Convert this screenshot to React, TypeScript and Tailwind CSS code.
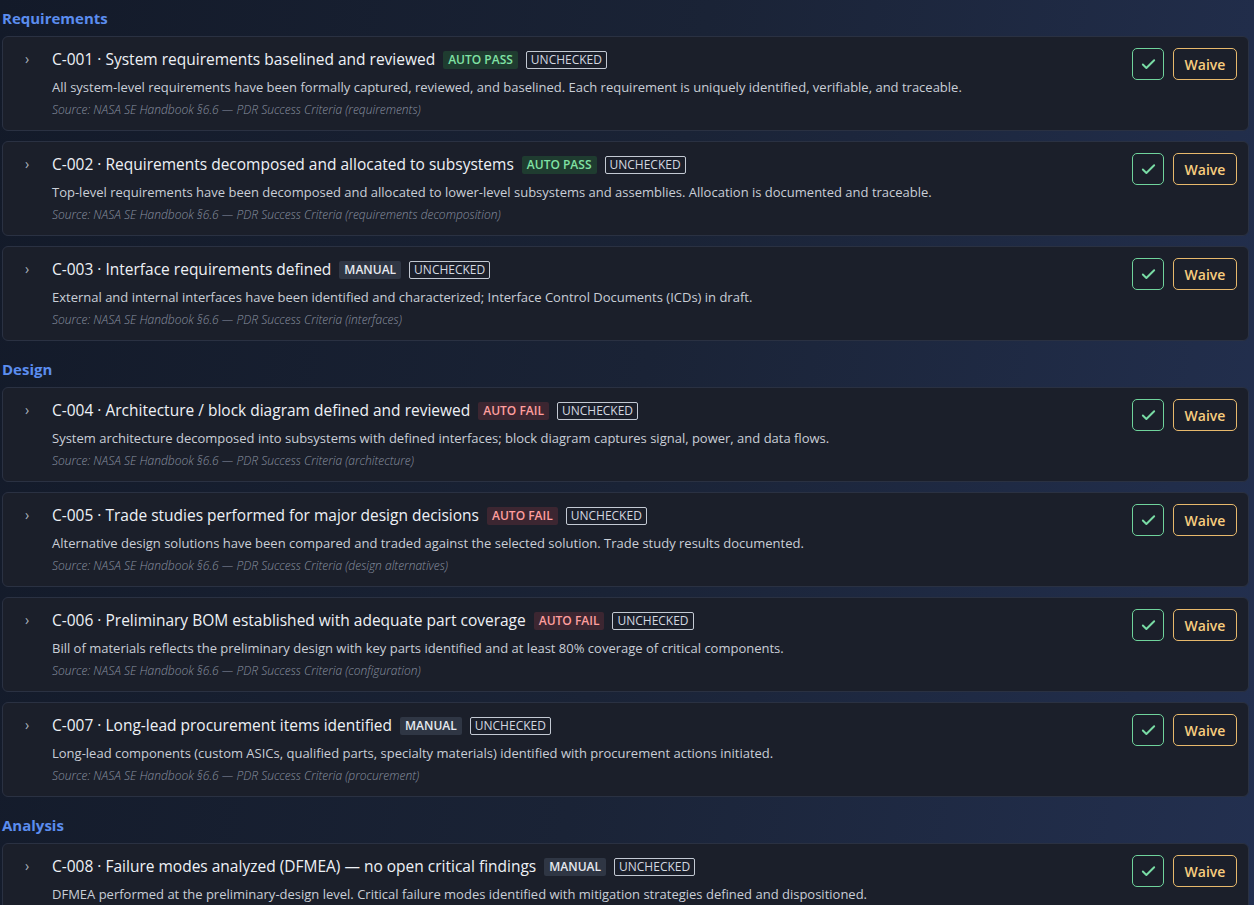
import { Check } from 'lucide-react';

type Mode = 'pass' | 'fail' | 'manual';

interface Criterion {
  id: string;
  title: string;
  mode: Mode;
  desc: string;
  topic: string;
}

const sections: { name: string; items: Criterion[] }[] = [
  {
    name: 'Requirements',
    items: [
      {
        id: 'C-001',
        title: 'System requirements baselined and reviewed',
        mode: 'pass',
        desc: 'All system-level requirements have been formally captured, reviewed, and baselined. Each requirement is uniquely identified, verifiable, and traceable.',
        topic: 'requirements',
      },
      {
        id: 'C-002',
        title: 'Requirements decomposed and allocated to subsystems',
        mode: 'pass',
        desc: 'Top-level requirements have been decomposed and allocated to lower-level subsystems and assemblies. Allocation is documented and traceable.',
        topic: 'requirements decomposition',
      },
      {
        id: 'C-003',
        title: 'Interface requirements defined',
        mode: 'manual',
        desc: 'External and internal interfaces have been identified and characterized; Interface Control Documents (ICDs) in draft.',
        topic: 'interfaces',
      },
    ],
  },
  {
    name: 'Design',
    items: [
      {
        id: 'C-004',
        title: 'Architecture / block diagram defined and reviewed',
        mode: 'fail',
        desc: 'System architecture decomposed into subsystems with defined interfaces; block diagram captures signal, power, and data flows.',
        topic: 'architecture',
      },
      {
        id: 'C-005',
        title: 'Trade studies performed for major design decisions',
        mode: 'fail',
        desc: 'Alternative design solutions have been compared and traded against the selected solution. Trade study results documented.',
        topic: 'design alternatives',
      },
      {
        id: 'C-006',
        title: 'Preliminary BOM established with adequate part coverage',
        mode: 'fail',
        desc: 'Bill of materials reflects the preliminary design with key parts identified and at least 80% coverage of critical components.',
        topic: 'configuration',
      },
      {
        id: 'C-007',
        title: 'Long-lead procurement items identified',
        mode: 'manual',
        desc: 'Long-lead components (custom ASICs, qualified parts, specialty materials) identified with procurement actions initiated.',
        topic: 'procurement',
      },
    ],
  },
  {
    name: 'Analysis',
    items: [
      {
        id: 'C-008',
        title: 'Failure modes analyzed (DFMEA) — no open critical findings',
        mode: 'manual',
        desc: 'DFMEA performed at the preliminary-design level. Critical failure modes identified with mitigation strategies defined and dispositioned.',
        topic: 'risk',
      },
    ],
  },
];

function ModeBadge({ mode }: { mode: Mode }) {
  if (mode === 'pass')
    return (
      <span className="px-[5px] h-[18px] leading-[18px] rounded-[2px] bg-[#1f3c30] text-[#80e2a4] text-[12px] font-semibold">
        AUTO PASS
      </span>
    );
  if (mode === 'fail')
    return (
      <span className="px-[5px] h-[18px] leading-[18px] rounded-[2px] bg-[#3c2631] text-[#ff9e9e] text-[12px] font-semibold">
        AUTO FAIL
      </span>
    );
  return (
    <span className="px-[5px] h-[18px] leading-[18px] rounded-[2px] bg-[#2f3644] text-[#e6e9ef] text-[12px] font-semibold">
      MANUAL
    </span>
  );
}

function Card({ c }: { c: Criterion }) {
  return (
    <div className="flex items-start h-[95px] rounded-[6px] border border-[#2a3142] bg-[#1b1f2a] pl-[22px] pr-[11px] pt-[10px]">
      <span className="w-[27px] text-[#aab1bd] text-[14px] leading-[20px] mt-[2px]">›</span>
      <div className="flex-1 min-w-0">
        <div className="flex items-center gap-[8px] h-[26px]">
          <span className="text-[15.5px] font-medium text-[#eef1f6]">
            {c.id} · {c.title}
          </span>
          <ModeBadge mode={c.mode} />
          <span className="px-[4px] h-[18px] leading-[16px] rounded-[2px] border border-[#c3c9d3] text-[#d3d8e0] text-[12px] font-medium">
            UNCHECKED
          </span>
        </div>
        <p className="mt-[4px] text-[13px] leading-[20px] text-[#c9ced7]">{c.desc}</p>
        <p className="mt-[4px] text-[12px] leading-[18px] italic font-light text-[#8a92a1]">
          Source: NASA SE Handbook §6.6 — PDR Success Criteria ({c.topic})
        </p>
      </div>
      <div className="flex gap-[9px] shrink-0 mt-[1px]">
        <button className="w-[32px] h-[32px] flex items-center justify-center rounded-[5px] border border-[#6fd39c] text-[#79dca5]">
          <Check size={17} strokeWidth={2.75} />
        </button>
        <button className="w-[64px] h-[32px] rounded-[5px] border border-[#e7b96c] text-[#f7cd7e] text-[14px] font-semibold">
          Waive
        </button>
      </div>
    </div>
  );
}

export default function App() {
  return (
    <div
      className="min-h-[905px] bg-[linear-gradient(100deg,#131a29_0%,#1a2336_50%,#233050_100%)] px-[2px] pb-[10px]"
      style={{ fontFamily: '"Open Sans", "Noto Sans", sans-serif' }}
    >
      {sections.map((s, i) => (
        <div key={s.name} className={i > 0 ? 'mt-[10px]' : ''}>
          <h2 className="h-[36px] flex items-center text-[15px] font-bold text-[#5b8def]">{s.name}</h2>
          <div className="flex flex-col gap-[10px] pr-[3px]">
            {s.items.map(c => (
              <Card key={c.id} c={c} />
            ))}
          </div>
        </div>
      ))}
    </div>
  );
}
